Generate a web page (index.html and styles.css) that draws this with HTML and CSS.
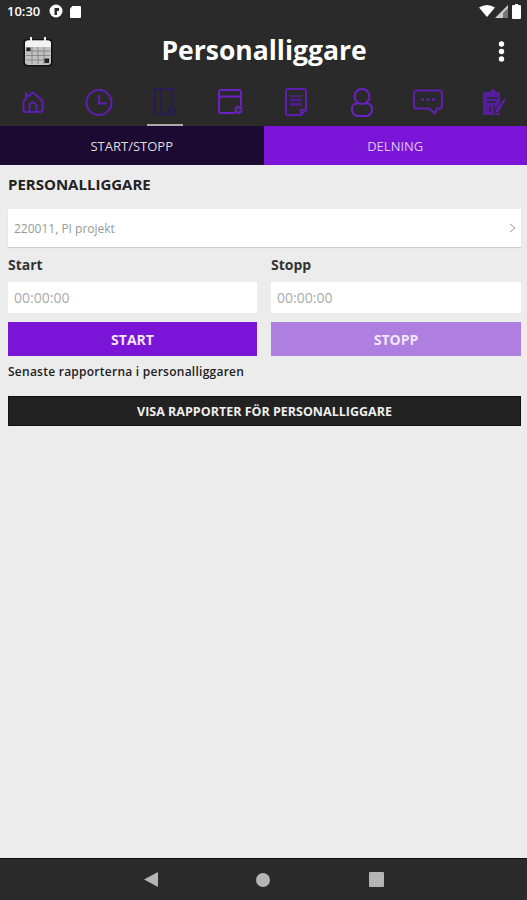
FILE: index.html
```html
<!DOCTYPE html>
<html lang="sv">
<head>
<meta charset="utf-8">
<title>Personalliggare</title>
<link rel="stylesheet" href="styles.css">
</head>
<body>
<div class="app">
  <header class="dark">
    <div class="status">
      <span class="time">10:30</span>
      <svg width="14" height="14" viewBox="0 0 14 14"><circle cx="7" cy="7" r="6.500" fill="#fff"/><path d="M5.500 11V4h4.500v3H8v4z" fill="#2a2a2a"/></svg>
      <svg width="12" height="13" viewBox="0 0 12 13"><path d="M3.500 1H11a1 1 0 0 1 1 1v10a1 1 0 0 1-1 1H2a1 1 0 0 1-1-1V3.500z" fill="#fff"/></svg>
      <span class="st-gap"></span>
      <svg width="16" height="12" viewBox="0 0 16 12"><path d="M0 2.500Q8-2.500 16 2.500L8 12z" fill="#fff"/></svg>
      <svg class="sig" width="13" height="13" viewBox="0 0 13 13"><path d="M13 0v13H0z" fill="#ccc"/><path d="M13 3v10H8V8z" fill="#777"/></svg>
      <svg class="batt" width="9" height="15" viewBox="0 0 9 15"><path d="M3 0h3v1h2a1 1 0 0 1 1 1v12a1 1 0 0 1-1 1H1a1 1 0 0 1-1-1V2a1 1 0 0 1 1-1h2z" fill="#fff"/></svg>
    </div>
    <div class="titlebar">
      <svg class="cal" width="30" height="31" viewBox="0 0 30 31">
        <rect x=".5" y="3" width="29" height="27.500" rx="4" fill="#111"/>
        <rect x="2" y="4.500" width="26" height="24.500" rx="3" fill="#c2c2c2"/>
        <path d="M2 11V7.500a3 3 0 0 1 3-3h20a3 3 0 0 1 3 3V11z" fill="#f2f2f2"/>
        <path d="M8 1v6M22 1v6" stroke="#f2f2f2" stroke-width="2"/>
        <path d="M3 15h24M3 19.500h24M3 24h24M9 11v17M15 11v17M21 11v17" stroke="#858585" stroke-width=".9"/>
        <rect x="3.500" y="11.500" width="4" height="3.500" fill="#222"/>
        <rect x="21.500" y="22.500" width="4.500" height="4.500" fill="#222"/>
      </svg>
      <h1>Personalliggare</h1>
      <svg class="more" width="7" height="21" viewBox="0 0 7 21"><circle cx="3.500" cy="3" r="2.700" fill="#fff"/><circle cx="3.500" cy="10.500" r="2.700" fill="#fff"/><circle cx="3.500" cy="18" r="2.700" fill="#fff"/></svg>
    </div>
    <nav class="icons">
      <div class="ic"><svg width="22" height="22" viewBox="0 0 22 22" fill="none" stroke="#5f1fae" stroke-width="2"><path d="M3.500 21a2 2 0 0 1-2-2v-9L4 7.500V2.500L6.500 5 11 1.500 20.500 10V19a2 2 0 0 1-2 2z"/><path d="M7.500 21v-6a3.500 3.500 0 0 1 7 0v6"/></svg></div>
      <div class="ic"><svg width="28" height="28" viewBox="0 0 28 28" fill="none" stroke="#5f1fae" stroke-width="2"><circle cx="14" cy="14.500" r="12.500"/><path d="M14 7v8.500h8"/></svg></div>
      <div class="ic"><svg width="24" height="28" viewBox="0 0 24 28" fill="none" stroke="#2a1a52" stroke-width="2"><path d="M2 26V1h17v19M8 1v25M2 26h13"/><circle cx="19" cy="23.500" r="3"/></svg></div>
      <div class="ic"><svg width="26" height="26" viewBox="0 0 26 26" fill="none" stroke="#6b21c4" stroke-width="2"><path d="M17 24H3a2 2 0 0 1-2-2V3a2 2 0 0 1 2-2h18a2 2 0 0 1 2 2v14M1 7.500h22"/><circle cx="20.500" cy="21" r="4" fill="#6b21c4" stroke="none"/><path d="M18 21h5M20.500 18.500v5" stroke="#2a2a2a" stroke-width="1"/></svg></div>
      <div class="ic"><svg width="22" height="28" viewBox="0 0 22 28" fill="none" stroke="#5f1fae" stroke-width="2"><path d="M16 27H3a2 2 0 0 1-2-2V3a2 2 0 0 1 2-2h16a2 2 0 0 1 2 2v19zv-5h5"/><path d="M5 8h12" stroke-width="1" /><path d="M5 12h12M5 16.500h12" stroke-width="3" stroke="#4c1c8c"/></svg></div>
      <div class="ic"><svg width="22" height="29" viewBox="0 0 22 29" fill="none" stroke="#6b21c4" stroke-width="2"><circle cx="11" cy="8.500" r="7.500"/><path d="M7 15.500H6a5 5 0 0 0-5 5v1.500a6 6 0 0 0 6 6h8a6 6 0 0 0 6-6v-1.500a5 5 0 0 0-5-5h-1"/></svg></div>
      <div class="ic"><svg width="30" height="27" viewBox="0 0 30 27" fill="none" stroke="#5f1fae" stroke-width="2.200"><path d="M4 1.500h22a3 3 0 0 1 3 3v12a3 3 0 0 1-3 3h-2l-2 5-6-5H4a3 3 0 0 1-3-3v-12a3 3 0 0 1 3-3z"/><path d="M8 10.500h3M13.500 10.500h3M19 10.500h3" stroke-width="2.500"/></svg></div>
      <div class="ic"><svg width="24" height="28" viewBox="0 0 24 28"><path d="M5 4h3l2-3h2l2 3h2a2 2 0 0 1 2 2v20a1 1 0 0 1-1 1H2a1 1 0 0 1-1-1V6a2 2 0 0 1 2-2z" fill="#561d9c"/><path d="M5 10h11M5 14h9M8 18v6M12 18v5" stroke="#2a2a2a" stroke-width="1.300"/><path d="M23 9 14 21l-2 5 5-2 7-12z" fill="#5f1fae" stroke="#2a2a2a"/></svg></div>
    </nav>
  </header>
  <div class="tabs">
    <div class="tab tab-off">START/STOPP</div>
    <div class="tab tab-on">DELNING</div>
  </div>
  <main>
    <h2>PERSONALLIGGARE</h2>
    <div class="picker"><span>220011, PI projekt</span><svg width="7" height="10" viewBox="0 0 7 10" fill="none" stroke="#999" stroke-width="1"><path d="m1 1 5 4-5 4"/></svg></div>
    <div class="cols">
      <div class="col">
        <label>Start</label>
        <div class="field">00:00:00</div>
        <div class="btn btn-start">START</div>
      </div>
      <div class="col">
        <label>Stopp</label>
        <div class="field">00:00:00</div>
        <div class="btn btn-stop">STOPP</div>
      </div>
    </div>
    <p class="latest">Senaste rapporterna i personalliggaren</p>
    <div class="report">VISA RAPPORTER FÖR PERSONALLIGGARE</div>
  </main>
  <footer>
    <svg width="14" height="15" viewBox="0 0 14 15"><path d="M14 0v15L0 7.500z" fill="#b5b5b5"/></svg>
    <svg width="14" height="14" viewBox="0 0 14 14"><circle cx="7" cy="7" r="7" fill="#b5b5b5"/></svg>
    <svg width="15" height="15" viewBox="0 0 15 15"><rect width="15" height="15" rx="1" fill="#b5b5b5"/></svg>
  </footer>
</div>
</body>
</html>
```
FILE: styles.css
```css
* { box-sizing: border-box; }
html, body { margin: 0; height: 100%; }
body { font-family: "Open Sans", "Noto Sans", sans-serif; background: #ececec; overflow: hidden; }
.app { height: 900px; display: flex; flex-direction: column; }
.dark { background: #2a2a2a; color: #fff; height: 126px; flex: none; }
.status { height: 22px; display: flex; align-items: center; padding: 0 6px 0 7px; gap: 6px; }
.time { font-size: 13px; font-weight: 600; margin-right: 3px; }
.st-gap { flex: 1; }
.status .sig { margin-left: -6px; }
.status .batt { margin-left: -2px; }
.titlebar { height: 58px; display: grid; grid-template-columns: 1fr auto 1fr; align-items: center; padding: 0 22px 0 23px; }
.titlebar h1 { margin: 0 0 2px; font-size: 26.500px; font-weight: 700; line-height: 1; }
.more { justify-self: end; }
.icons { height: 46px; display: grid; grid-template-columns: repeat(8, 1fr); }
.ic { display: flex; justify-content: center; align-items: center; padding-bottom: 2px; }
.ic:nth-child(3) { position: relative; }
.ic:nth-child(3)::after { content: ""; position: absolute; left: 15px; right: 15px; bottom: 0; height: 2px; background: #aaa; }
.tabs { display: flex; height: 39px; flex: none; }
.tab { flex: 1; display: flex; align-items: center; justify-content: center; font-size: 13px; }
.tab-off { background: #1c0a33; color: #ddd; }
.tab-on { background: #7a14d6; color: #dcc5f5; }
main { flex: 1; padding: 0 6px 0 8px; }
h2 { margin: 0; padding-top: 10px; font-size: 15px; line-height: 19px; font-weight: 700; color: #222; }
.picker { margin-top: 15px; height: 38px; background: #fff; display: flex; align-items: center; justify-content: space-between; padding: 0 5px 0 6px; font-size: 12px; color: #999; box-shadow: 0 1px 1px #ccc; }
.cols { display: grid; grid-template-columns: 249px 250px; gap: 14px; }
.col label { display: block; margin-top: 9px; font-size: 14px; line-height: 18px; font-weight: 700; color: #333; }
.field { margin-top: 8px; height: 31px; background: #fff; display: flex; align-items: center; padding: 0 6px; font-size: 14px; color: #aaa; }
.btn { margin-top: 9px; height: 34px; display: flex; align-items: center; justify-content: center; color: #f1e6fb; font-size: 14px; font-weight: 700; }
.btn-start { background: #7a14d6; }
.btn-stop { background: #ae7ee0; }
.latest { margin: 7px 0 0; font-size: 12px; line-height: 17px; font-weight: 600; color: #222; letter-spacing: .25px; }
.report { margin-top: 16px; height: 30px; background: #222; border: 1px solid #111; color: #eee; display: flex; align-items: center; justify-content: center; font-size: 12.500px; font-weight: 700; }
footer { height: 42px; flex: none; background: #2a2a2a; border-top: 1px solid #111; display: flex; align-items: center; justify-content: center; gap: 98.500px; }
```
